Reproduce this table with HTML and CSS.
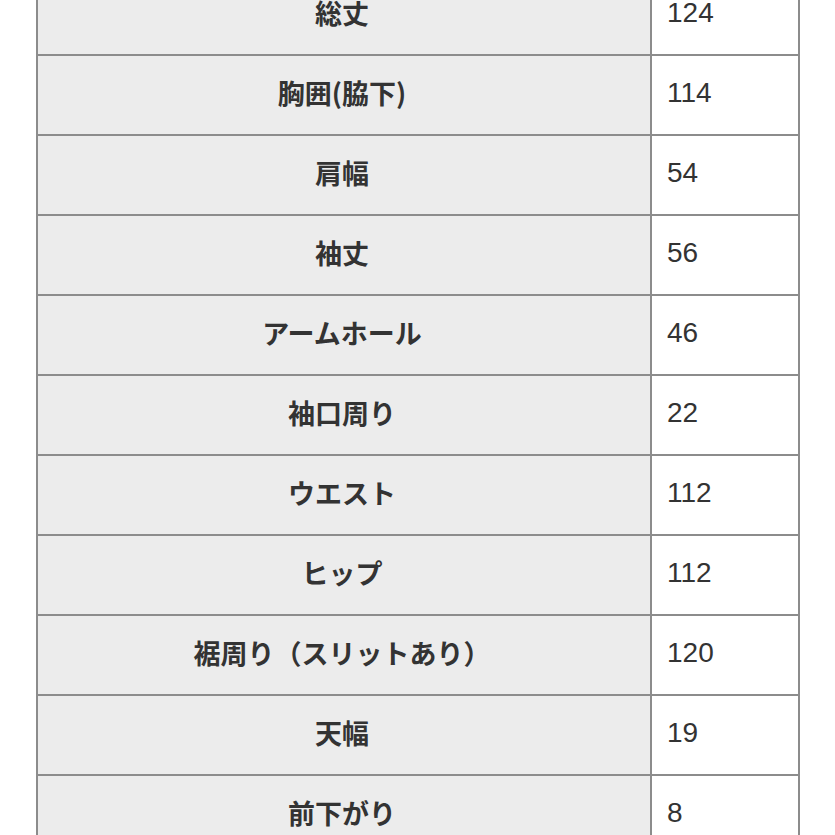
FILE: index.html
```html
<!DOCTYPE html>
<html lang="ja">
<head>
<meta charset="utf-8">
<link rel="stylesheet" href="styles.css">
</head>
<body>
<table class="size-table">
<colgroup><col class="c-label"><col class="c-value"></colgroup>
<tbody>
<tr><th>総丈</th><td>124</td></tr>
<tr><th>胸囲(脇下)</th><td>114</td></tr>
<tr><th>肩幅</th><td>54</td></tr>
<tr><th>袖丈</th><td>56</td></tr>
<tr><th>アームホール</th><td>46</td></tr>
<tr><th>袖口周り</th><td>22</td></tr>
<tr><th>ウエスト</th><td>112</td></tr>
<tr><th>ヒップ</th><td>112</td></tr>
<tr><th>裾周り（スリットあり）</th><td>120</td></tr>
<tr><th>天幅</th><td>19</td></tr>
<tr><th>前下がり</th><td>8</td></tr>
</tbody>
</table>
</body>
</html>
```
FILE: styles.css
```css
html, body {
  margin: 0;
  padding: 0;
  background: #ffffff;
  overflow: hidden;
}
body {
  font-family: "Noto Sans CJK JP", "Noto Sans", sans-serif;
  color: #333333;
}
.size-table {
  margin: -26px 0 0 36px;
  border-collapse: collapse;
  table-layout: fixed;
  width: 764px;
}
.c-label { width: 614px; }
.c-value { width: 148px; }
.size-table th,
.size-table td {
  border: 2px solid #8c8c8c;
  height: 80px;
  padding: 0;
  box-sizing: border-box;
}
.size-table th {
  background: #ececec;
  font-weight: 700;
  font-size: 27px;
  text-align: center;
  line-height: 1;
  padding: 0 4px 6px 0;
}
.size-table td {
  background: #ffffff;
  font-weight: 400;
  font-size: 28px;
  text-align: left;
  padding: 0 0 4px 15px;
  line-height: 1;
  font-family: "Liberation Sans", "Noto Sans CJK JP", sans-serif;
}
```
